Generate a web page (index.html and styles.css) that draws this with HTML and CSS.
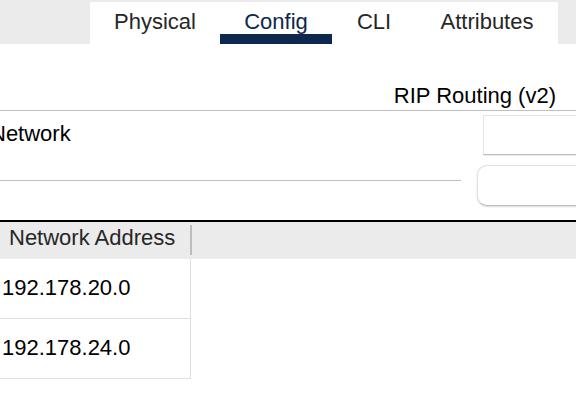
FILE: index.html
```html
<!DOCTYPE html>
<html lang="en">
<head>
<meta charset="utf-8">
<title>RIP Routing</title>
<link rel="stylesheet" href="styles.css">
</head>
<body>
<nav class="tab-bar">
  <div class="tabs" role="tablist">
    <button class="tab" type="button" role="tab" aria-selected="false">Physical</button>
    <button class="tab tab-active" type="button" role="tab" aria-selected="true">Config</button>
    <button class="tab" type="button" role="tab" aria-selected="false">CLI</button>
    <button class="tab" type="button" role="tab" aria-selected="false">Attributes</button>
  </div>
</nav>
<main>
  <h1 class="title">RIP Routing (v2)</h1>
  <form class="network-form">
    <label class="network-label" for="network">Network</label>
    <input class="network-input" id="network" type="text">
    <hr class="divider">
    <button class="add-button" type="button"></button>
  </form>
  <table class="networks">
    <thead>
      <tr><th class="address-head" scope="col">Network Address</th><td></td></tr>
    </thead>
    <tbody>
      <tr><td class="address">192.178.20.0</td><td></td></tr>
      <tr><td class="address">192.178.24.0</td><td></td></tr>
    </tbody>
  </table>
</main>
</body>
</html>
```
FILE: styles.css
```css
* {
  box-sizing: border-box;
}

body {
  margin: 0;
  overflow-x: hidden;
  background: #fff;
  color: #000;
  font: 22px/24px "Liberation Sans", Arial, sans-serif;
}

button,
input {
  font: inherit;
}

.tab-bar {
  display: flex;
  padding: 2px 18px 0 90px;
  background: #ebebeb;
}

.tabs {
  display: grid;
  flex: 1;
  grid-template-columns: 130fr 112fr 84fr 142fr;
  background: #fff;
}

.tab {
  padding: 8px 0 0;
  border: 0;
  border-bottom: 10px solid transparent;
  background: none;
  color: #262626;
  text-align: center;
}

.tab-active {
  border-bottom-color: #0d274d;
  color: #0d274d;
}

.title {
  margin: 0;
  padding: 40px 20px 2px 0;
  border-bottom: 1px solid #bfbfbf;
  font-size: 22px;
  font-weight: 400;
  text-align: right;
}

.network-form {
  display: grid;
  grid-template-columns: 1fr 99px;
  gap: 10px 16px;
  align-items: start;
  padding: 4px 0 14px;
}

.network-label {
  margin-left: -10px;
  padding-top: 7px;
}

.network-input {
  height: 40px;
  min-width: 0;
  margin: 0 0 0 6px;
  padding: 0 8px;
  border: 1px solid #e4e4e4;
  border-right: 0;
  border-bottom-color: #bdbdbd;
  border-radius: 0;
  background: #fff;
  box-shadow: 0 1px 0 #ececec;
}

.divider {
  width: 100%;
  margin: 15px 0 0;
  border: 0;
  border-top: 1px solid #bfbfbf;
}

.add-button {
  height: 41px;
  margin-right: -12px;
  border: 1px solid #e0e0e0;
  border-bottom-color: #bdbdbd;
  border-radius: 10px;
  background: #fff;
  box-shadow: 0 1px 2px rgba(0, 0, 0, 0.15);
}

.networks {
  width: 100%;
  border-top: 2px solid #000;
  border-spacing: 0;
  table-layout: fixed;
}

.networks thead tr {
  height: 37px;
  background: #ebebeb;
}

.address-head {
  position: relative;
  width: 191px;
  padding: 4px 0 9px 9px;
  color: #262626;
  font-weight: 400;
  text-align: left;
  white-space: nowrap;
}

.address-head::after {
  content: "";
  position: absolute;
  top: 3px;
  right: -1px;
  width: 2px;
  height: 30px;
  background: #bdbdbd;
}

.address {
  padding: 17px 0 18px 2px;
  border-right: 1px solid #e0e0e0;
  border-bottom: 1px solid #e0e0e0;
}
```
